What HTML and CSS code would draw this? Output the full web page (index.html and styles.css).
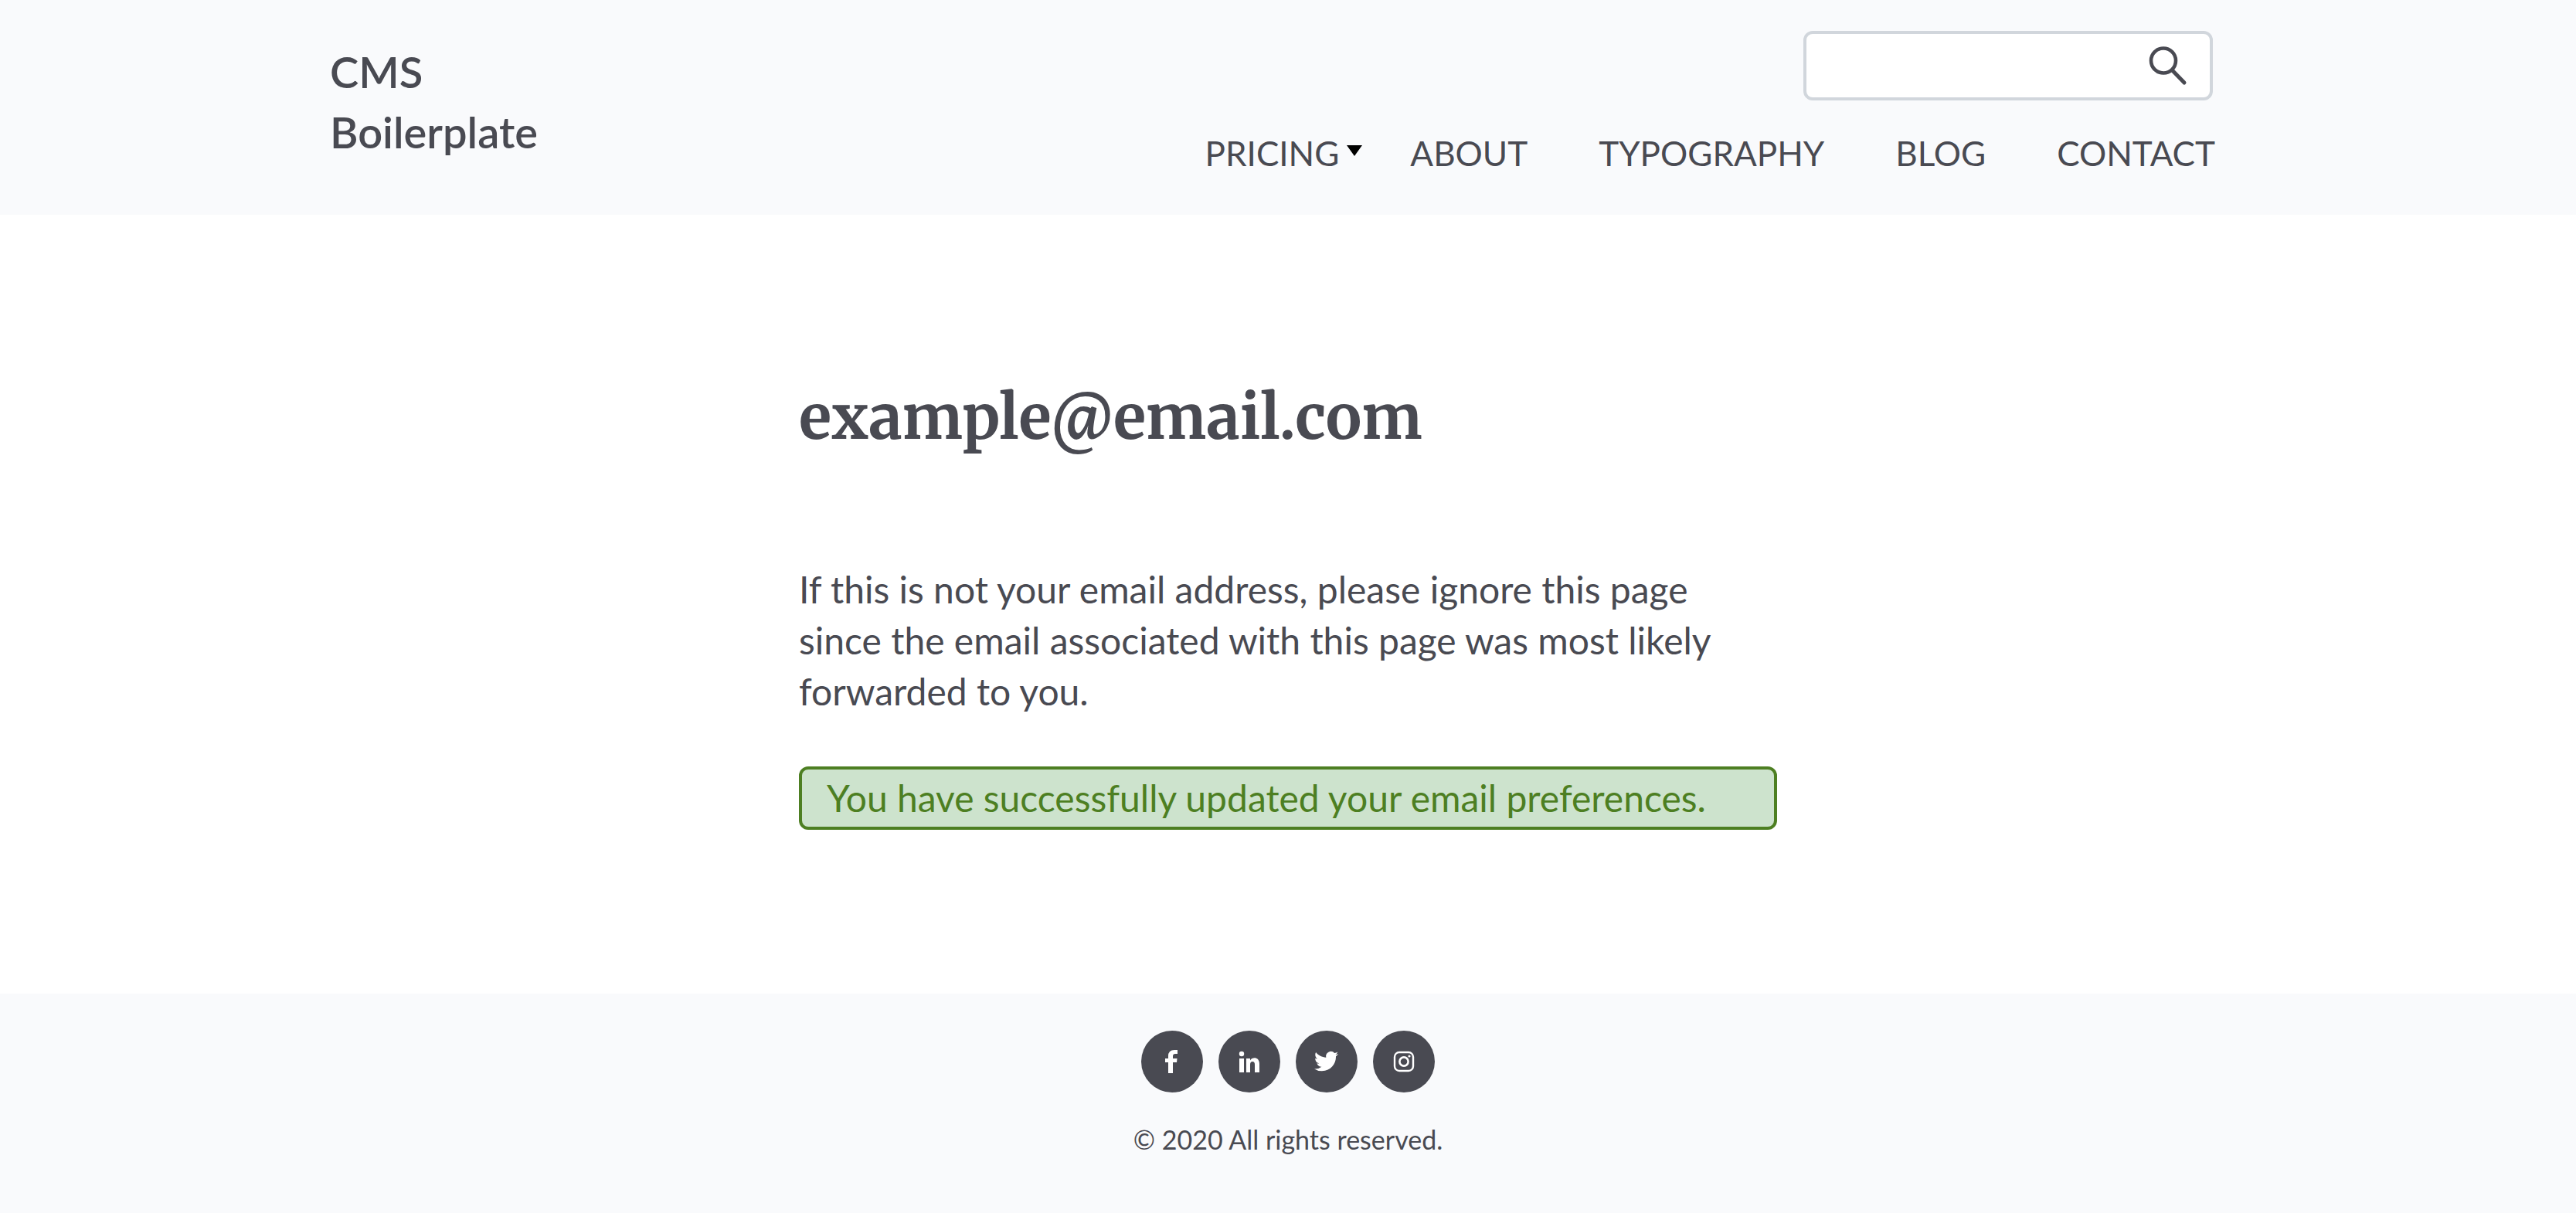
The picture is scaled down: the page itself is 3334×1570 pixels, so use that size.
FILE: index.html
```html
<!DOCTYPE html>
<html lang="en">
<head>
<meta charset="utf-8">
<title>Email preferences | CMS Boilerplate</title>
<meta name="viewport" content="width=device-width, initial-scale=1">
<link rel="stylesheet" href="styles.css">
</head>
<body>
<header class="site-header">
  <div class="site-header__inner">
    <a class="logo" href="#">CMS<br>Boilerplate</a>
    <div class="site-header__side">
      <form class="search" role="search">
        <input class="search__input" type="text" aria-label="Search">
        <button class="search__button" type="submit" aria-label="Search">
          <svg viewBox="0 0 48 48" aria-hidden="true"><circle cx="18" cy="18.5" r="16" fill="none" stroke="currentColor" stroke-width="4.6"/><path d="M29.5 31L45 47" fill="none" stroke="currentColor" stroke-width="5" stroke-linecap="round"/></svg>
        </button>
      </form>
      <nav aria-label="Main">
        <ul class="menu">
          <li class="menu__item menu__item--parent"><a class="menu__link" href="#">PRICING</a></li>
          <li class="menu__item"><a class="menu__link" href="#">ABOUT</a></li>
          <li class="menu__item"><a class="menu__link" href="#">TYPOGRAPHY</a></li>
          <li class="menu__item"><a class="menu__link" href="#">BLOG</a></li>
          <li class="menu__item"><a class="menu__link" href="#">CONTACT</a></li>
        </ul>
      </nav>
    </div>
  </div>
</header>
<main class="content">
  <h1 class="content__title">example@email.com</h1>
  <p class="content__text">If this is not your email address, please ignore this page since the email associated with this page was most likely forwarded to you.</p>
  <p class="notice" role="status">You have successfully updated your email preferences.</p>
</main>
<footer class="site-footer">
  <div class="social">
    <a class="social__link" href="#" aria-label="Facebook"><svg viewBox="0 0 80 80" aria-hidden="true"><path d="M47 25v5h-3q-3 0-3 3v3h5.500l-.5 5h-5v14h-6V41h-4v-5h4v-3q0-8 8-8z"/></svg></a>
    <a class="social__link" href="#" aria-label="LinkedIn"><svg viewBox="0 0 80 80" aria-hidden="true"><circle cx="30" cy="30" r="3.200"/><path d="M27 36h6v18h-6zM36 36h5v2.500c3-5 12-4.500 12 4.500v11h-6V44q0-4-3-4t-3 4v10h-5z"/></svg></a>
    <a class="social__link" href="#" aria-label="Twitter"><svg viewBox="0 0 80 80" aria-hidden="true"><path transform="translate(24 24) scale(1.3)" d="M23.953 4.57a10 10 0 01-2.825.775 4.958 4.958 0 002.163-2.723c-.951.555-2.005.959-3.127 1.184a4.92 4.92 0 00-8.384 4.482C7.69 8.095 4.067 6.13 1.64 3.162a4.822 4.822 0 00-.666 2.475c0 1.71.87 3.213 2.188 4.096a4.904 4.904 0 01-2.228-.616v.06a4.923 4.923 0 003.946 4.827 4.996 4.996 0 01-2.212.085 4.936 4.936 0 004.604 3.417 9.867 9.867 0 01-6.102 2.105c-.39 0-.779-.023-1.17-.067a13.995 13.995 0 007.557 2.209c9.053 0 13.998-7.496 13.998-13.985 0-.21 0-.42-.015-.63A9.935 9.935 0 0024 4.590z"/></svg></a>
    <a class="social__link" href="#" aria-label="Instagram"><svg viewBox="0 0 80 80" aria-hidden="true"><rect x="28" y="28" width="24" height="24" rx="6" fill="none" stroke="currentColor" stroke-width="2.4"/><circle cx="40" cy="40" r="5.600" fill="none" stroke="currentColor" stroke-width="2.600"/><circle cx="47" cy="33" r="1.600"/></svg></a>
  </div>
  <p class="copyright">© 2020 All rights reserved.</p>
</footer>
</body>
</html>
```
FILE: styles.css
```css
* {
  box-sizing: border-box;
}

body {
  margin: 0;
  background: #fff;
  color: #494a52;
  font-family: Lato, "Liberation Sans", sans-serif;
  font-weight: 400;
  font-size: 48px;
  line-height: 66px;
}

a {
  color: inherit;
  text-decoration: none;
}

.site-header {
  background: #f9fafc;
}

.site-header__inner {
  display: flex;
  justify-content: space-between;
  max-width: 2480px;
  margin: 0 auto;
  padding: 40px 40px 44px 0;
}

.logo {
  padding-top: 14px;
  font-size: 56px;
  font-weight: 600;
  line-height: 78px;
}

.site-header__side {
  display: flex;
  flex-direction: column;
  align-items: flex-end;
  gap: 32px;
}

.search {
  display: flex;
  align-items: flex-start;
  width: 530px;
  height: 90px;
  margin-right: 3px;
  border: 4px solid #d1d6dc;
  border-radius: 12px;
  background: #fff;
}

.search__input {
  flex: 1;
  min-width: 0;
  height: 100%;
  padding: 0 24px;
  border: 0;
  background: transparent;
  color: inherit;
  font: inherit;
  outline: 0;
}

.search__button {
  width: 48px;
  height: 48px;
  margin: 16px 30px 0 0;
  padding: 0;
  border: 0;
  background: transparent;
  color: inherit;
}

.search__button svg {
  display: block;
  overflow: visible;
}

.menu {
  display: flex;
  gap: 92px;
  margin: 0;
  padding: 0;
  list-style: none;
  font-size: 44px;
  line-height: 72px;
}

.menu__item--parent {
  display: flex;
  align-items: center;
  gap: 10px;
  margin-right: -30px;
}

.menu__item--parent::after {
  content: "";
  margin-bottom: 6px;
  border: 10px solid transparent;
  border-top: 14px solid #000;
  border-bottom: 0;
}

.content {
  max-width: 1266px;
  margin: 0 auto;
  padding: 204px 0 212px;
}

.content__title {
  margin: 0 0 132px;
  font-family: Merriweather, "DejaVu Serif Condensed", "DejaVu Serif", serif;
  font-size: 78px;
  font-weight: 700;
  line-height: 116px;
}

.content__text {
  margin: 0 0 64px;
}

.notice {
  margin: 0;
  padding: 4px 32px;
  border: 4px solid #4d7f22;
  border-radius: 12px;
  background: #cde3cd;
  color: #4d7f22;
}

.site-footer {
  padding: 48px 0 70px;
  background: #f9fafc;
  text-align: center;
}

.social {
  display: flex;
  justify-content: center;
  gap: 20px;
}

.social__link {
  width: 80px;
  height: 80px;
  border-radius: 50%;
  background: #494a52;
  color: #fff;
}

.social__link svg {
  display: block;
  fill: currentColor;
}

.copyright {
  margin: 36px 0 0;
  font-size: 34px;
  line-height: 50px;
}
```
